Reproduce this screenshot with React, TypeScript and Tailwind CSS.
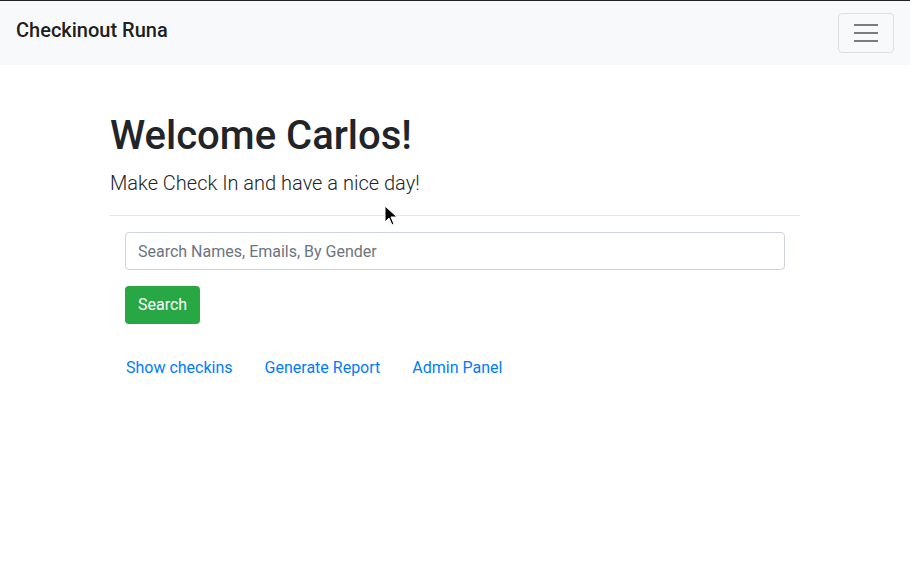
const links = ["Show checkins", "Generate Report", "Admin Panel"]

const App = () => {
  return (
    <div className="relative min-h-[562px] bg-white font-['Roboto',sans-serif] text-[#212529]">
      {/* navbar */}
      <nav className="flex h-[65px] items-center justify-between border-t border-[#222] bg-[#f8f9fa] pl-4 pr-4">
        <span className="-mt-[7px] text-[20px] leading-[30px] font-medium text-black/90">Checkinout Runa</span>
        <button className="flex h-[40px] w-[56px] flex-col items-center justify-center gap-[6px] rounded border border-black/10">
          <span className="block h-[2px] w-[24px] bg-black/50" />
          <span className="block h-[2px] w-[24px] bg-black/50" />
          <span className="block h-[2px] w-[24px] bg-black/50" />
        </button>
      </nav>

      <div className="mx-auto w-[690px] pt-[47px]">
        <h1 className="mb-2 text-[40px] leading-[48px] font-medium">Welcome Carlos!</h1>
        <p className="mb-[17px] text-[20px] leading-[30px] font-light">Make Check In and have a nice day!</p>
        <hr className="border-t border-black/10" />

        <form className="mt-4 px-[15px]" onSubmit={(e) => e.preventDefault()}>
          <input
            type="text"
            placeholder="Search Names, Emails, By Gender"
            className="block h-[38px] w-full rounded border border-[#ced4da] px-3 text-base text-[#495057] placeholder:text-[#6c757d] outline-none"
          />
          <button className="mt-4 h-[38px] rounded bg-[#28a745] px-[13px] text-base text-white">Search</button>
        </form>

        <ul className="mt-[24px] flex">
          {links.map((l) => (
            <li key={l}>
              <a href="#" className="block px-4 py-2 text-base leading-6 text-[#007bff]">{l}</a>
            </li>
          ))}
        </ul>
      </div>

      {/* mouse pointer */}
      <svg className="absolute left-[384px] top-[205px]" width="16" height="24" viewBox="0 0 16 24">
        <path d="M1 1 L1 17 L5 13 L8 20 L10 19 L7 12 L13 12 Z" fill="#000" stroke="#fff" strokeWidth="1" />
      </svg>
    </div>
  )
}

export default App
